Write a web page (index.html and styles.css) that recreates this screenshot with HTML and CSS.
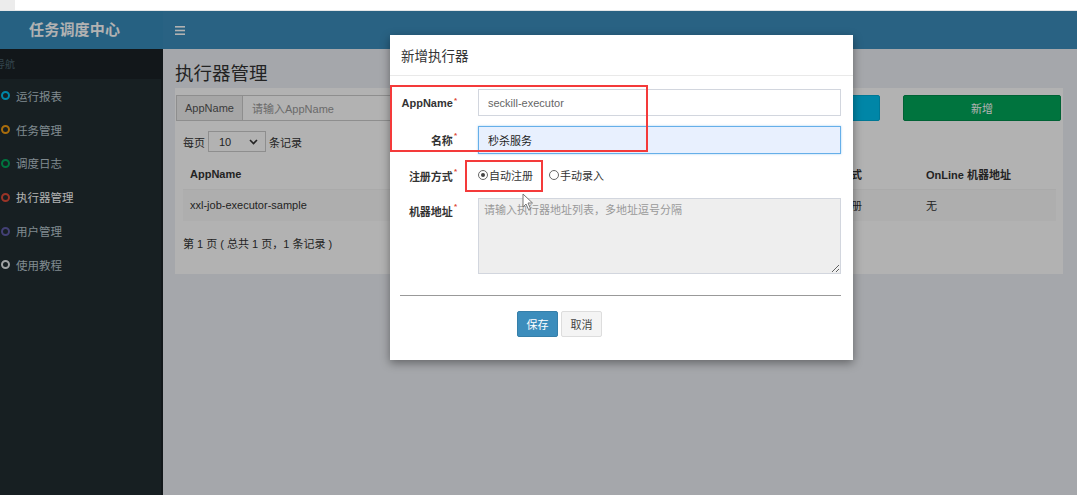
FILE: index.html
```html
<!DOCTYPE html>
<html lang="zh-CN">
<head>
<meta charset="utf-8">
<title>任务调度中心</title>
<link rel="stylesheet" href="styles.css">
</head>
<body>
<div class="chrome"><div class="chrome-tab"></div><div class="chrome-bar"></div></div>
<div class="app">
  <header class="topbar">
    <div class="logo">任务调度中心</div>
    <div class="toggle">
      <svg width="10" height="9" viewBox="0 0 10 9"><rect x="0" y="0" width="10" height="1.6" fill="#fff"/><rect x="0" y="3.7" width="10" height="1.6" fill="#fff"/><rect x="0" y="7.4" width="10" height="1.6" fill="#fff"/></svg>
    </div>
  </header>
  <div class="main">
    <aside class="sidebar">
      <div class="nav-header">导航</div>
      <ul class="menu">
        <li><span class="ring ring-aqua"></span><span>运行报表</span></li>
        <li><span class="ring ring-yellow"></span><span>任务管理</span></li>
        <li><span class="ring ring-green"></span><span>调度日志</span></li>
        <li class="active"><span class="ring ring-red"></span><span>执行器管理</span></li>
        <li><span class="ring ring-purple"></span><span>用户管理</span></li>
        <li><span class="ring ring-gray"></span><span>使用教程</span></li>
      </ul>
    </aside>
    <section class="content">
      <h1 class="page-title">执行器管理</h1>
      <div class="box">
        <div class="search-row">
          <div class="input-group">
            <span class="addon">AppName</span>
            <span class="search-input">请输入AppName</span>
          </div>
          <div class="btn-search">搜索</div>
          <div class="btn-add">新增</div>
        </div>
        <div class="length-row">
          <span>每页</span>
          <span class="select"><span>10</span>
            <svg width="9" height="6" viewBox="0 0 9 6"><path d="M1 1 L4.5 4.5 L8 1" fill="none" stroke="#333" stroke-width="1.6"/></svg>
          </span>
          <span>条记录</span>
        </div>
        <table class="grid">
          <colgroup><col class="c1"><col class="c2"><col class="c3"><col class="c4"><col class="c5"></colgroup>
          <thead>
            <tr><th>AppName</th><th>名称</th><th>排序</th><th>注册方式</th><th>OnLine 机器地址</th></tr>
          </thead>
          <tbody>
            <tr><td>xxl-job-executor-sample</td><td>示例执行器</td><td>1</td><td>自动注册</td><td>无</td></tr>
          </tbody>
        </table>
        <div class="pager">第 1 页 ( 总共 1 页，1 条记录 )</div>
      </div>
    </section>
  </div>
  <div class="backdrop"></div>
  <div class="modal">
    <div class="modal-header">新增执行器</div>
    <div class="modal-body">
      <div class="form">
        <label class="lbl lbl-mid">AppName<sup>*</sup></label>
        <input class="field" type="text" value="seckill-executor">
        <label class="lbl lbl-mid">名称<sup>*</sup></label>
        <input class="field field-focus" type="text" value="秒杀服务">
        <label class="lbl lbl-mid">注册方式<sup>*</sup></label>
        <div class="radios">
          <span class="radio checked"></span><span class="radio-text">自动注册</span>
          <span class="radio radio-second"></span><span class="radio-text">手动录入</span>
        </div>
        <label class="lbl lbl-top">机器地址<sup>*</sup></label>
        <textarea class="area" disabled placeholder="请输入执行器地址列表，多地址逗号分隔"></textarea>
      </div>
      <div class="rule"></div>
      <div class="actions">
        <span class="btn btn-primary">保存</span>
        <span class="btn btn-default">取消</span>
      </div>
    </div>
    <div class="mark mark-1"></div>
    <div class="mark mark-2"></div>
    <svg class="cursor" width="12" height="18" viewBox="0 0 12 18"><path d="M1 1 L1 14 L4 11 L6.5 16.5 L8.5 15.5 L6 10 L10.5 10 Z" fill="#fff" stroke="#777" stroke-width="1"/></svg>
  </div>
</div>
</body>
</html>
```
FILE: styles.css
```css
* { box-sizing: border-box; }
html, body { margin: 0; padding: 0; }
body {
  width: 1077px;
  height: 495px;
  overflow: hidden;
  font-family: "Liberation Sans", "Noto Sans CJK SC", sans-serif;
  font-size: 11px;
  color: #333;
  background: #fff;
}
.chrome {
  height: 11px;
  display: flex;
  background: #fff;
  border-bottom: 1px solid #e3e6e8;
}
.chrome-tab { width: 15px; height: 10px; background: #ececec; }
.chrome-bar { flex: 1; margin-left: 30px; background: #fff; border-radius: 0 0 6px 6px; }

.app {
  position: relative;
  height: 484px;
  display: flex;
  flex-direction: column;
}
.topbar {
  height: 38px;
  display: flex;
  background: #3c8dbc;
}
.logo {
  width: 163px;
  background: #378bbb;
  color: #fff;
  font-weight: bold;
  font-size: 15px;
  line-height: 38px;
  padding-left: 29px;
  letter-spacing: 0.2px;
}
.toggle {
  display: flex;
  align-items: center;
  padding-left: 12px;
}
.main {
  flex: 1;
  display: flex;
}
.sidebar {
  width: 163px;
  background: #222d32;
  border-right: 2px solid #1a2226;
}
.nav-header {
  height: 30px;
  background: #1a2226;
  color: #4b646f;
  font-size: 10px;
  line-height: 31px;
  text-indent: -5px;
  overflow: hidden;
}
.menu { list-style: none; margin: 0; padding: 0; }
.menu li {
  height: 33.8px;
  display: flex;
  align-items: center;
  color: #b8c7ce;
  font-size: 11.5px;
}
.menu li.active { color: #fff; }
.ring {
  width: 9px;
  height: 9px;
  border-radius: 50%;
  border: 2px solid #b8c7ce;
  margin-left: 1px;
  margin-right: 6px;
}
.ring-aqua { border-color: #00c0ef; }
.ring-yellow { border-color: #f39c12; }
.ring-green { border-color: #00a65a; }
.ring-red { border-color: #dd4b39; }
.ring-purple { border-color: #605ca8; }
.ring-gray { border-color: #e6e9eb; }

.content {
  flex: 1;
  background: #ecf0f5;
  padding: 0 14px 0 12px;
}
.page-title {
  margin: 15px 0 4px;
  font-size: 18.5px;
  line-height: 20px;
  font-weight: normal;
  color: #333;
}
.box {
  background: #fff;
  padding: 7px 0 21px;
}
.search-row {
  display: flex;
  height: 26px;
  margin-left: 1px;
  margin-right: 2px;
}
.input-group { flex: 1; display: flex; }
.addon {
  width: 67px;
  background: #eee;
  border: 1px solid #ccc;
  color: #555;
  display: flex;
  align-items: center;
  justify-content: center;
}
.search-input {
  flex: 1;
  border: 1px solid #ccc;
  border-left: 0;
  color: #999;
  padding-left: 9px;
  display: flex;
  align-items: center;
}
.btn-search, .btn-add {
  width: 158px;
  color: #fff;
  display: flex;
  align-items: center;
  justify-content: center;
  border-radius: 2px;
}
.btn-search { margin-left: 22px; background: #00c0ef; border: 1px solid #00acd6; }
.btn-add { margin-left: 23px; background: #00a65a; border: 1px solid #008d4c; }

.length-row {
  display: flex;
  align-items: center;
  margin: 10px 0 0 8px;
  height: 21px;
}
.select {
  width: 58px;
  height: 21px;
  border: 1px solid #ccc;
  margin: 0 3px 0 3px;
  display: flex;
  align-items: center;
  justify-content: space-between;
  padding: 0 7px 0 10px;
  color: #333;
}
.grid {
  margin: 7px 0 0 8px;
  border-collapse: collapse;
  table-layout: fixed;
  width: 873px;
}
.c1 { width: 217px; }
.c2 { width: 220px; }
.c3 { width: 191px; }
.c4 { width: 108px; }
.c5 { width: 137px; }
.grid th, .grid td {
  text-align: left;
  padding: 0 7px;
  white-space: nowrap;
  overflow: hidden;
}
.grid th { height: 30px; font-weight: bold; color: #333; }
.grid td { height: 32px; color: #333; background: #f9f9f9; border-top: 1px solid #f4f4f4; }
.pager {
  margin: 14px 0 0 8px;
  line-height: 18px;
  color: #333;
}

.backdrop {
  position: absolute;
  inset: 0;
  background: rgba(0, 0, 0, 0.3);
}
.modal {
  position: absolute;
  left: 390px;
  top: 24px;
  width: 463px;
  height: 325px;
  background: #fff;
  box-shadow: 0 3px 9px rgba(0, 0, 0, 0.4);
}
.modal-header {
  height: 41px;
  padding: 14px 0 0 11px;
  line-height: 16px;
  font-size: 13.5px;
  color: #333;
  border-bottom: 1px solid #e9e9e9;
}
.modal-body { padding: 13px 12px 0 10px; }
.form {
  display: grid;
  grid-template-columns: 60px 1fr;
  grid-template-rows: 27px 28px 24px 76px;
  column-gap: 18px;
  row-gap: 10px;
}
.lbl {
  font-weight: bold;
  font-size: 11px;
  color: #333;
  text-align: right;
  padding-right: 3px;
  white-space: nowrap;
}
.lbl-mid { align-self: center; }
.lbl-top { padding-top: 5px; }
.lbl sup {
  color: #dd4b39;
  font-size: 8px;
  vertical-align: top;
  margin-left: 1px;
  position: relative;
  top: -1px;
}
.field {
  width: 100%;
  height: 100%;
  border: 1px solid #d2d6de;
  padding: 0 9px;
  font: inherit;
  font-size: 11px;
  color: #666;
  outline: none;
  background: #fff;
}
.field-focus {
  border-color: #66afe9;
  background: #e8f0fe;
  color: #222;
  box-shadow: 0 0 2px rgba(102, 175, 233, 0.6);
}
.radios {
  display: flex;
  align-items: center;
  padding-bottom: 3px;
}
.radio {
  width: 10px;
  height: 10px;
  border: 1px solid #666;
  border-radius: 50%;
  position: relative;
  margin-right: 1px;
}
.radio.checked::after {
  content: "";
  position: absolute;
  left: 2px;
  top: 2px;
  width: 4px;
  height: 4px;
  border-radius: 50%;
  background: #444;
}
.radio-second { margin-left: 16px; }
.radio-text { color: #333; }
.area {
  width: 100%;
  height: 100%;
  border: 1px solid #d2d6de;
  background: #eee;
  padding: 2px 5px;
  font: inherit;
  font-size: 11px;
  resize: vertical;
  color: #999;
}
.area::placeholder { color: #999; }
.rule {
  margin-top: 21px;
  height: 1px;
  background: #999;
}
.actions {
  display: flex;
  gap: 3px;
  margin-top: 15px;
  padding-left: 117px;
}
.btn {
  width: 41px;
  height: 26px;
  display: flex;
  align-items: center;
  justify-content: center;
  border-radius: 2px;
  font-size: 11px;
}
.btn-primary { background: #3c8dbc; border: 1px solid #367fa9; color: #fff; }
.btn-default { background: #f4f4f4; border: 1px solid #ddd; color: #444; }

.mark {
  position: absolute;
  border: 2px solid #f43a3a;
}
.mark-1 { left: 0; top: 50px; width: 258px; height: 67px; }
.mark-2 { left: 75px; top: 125px; width: 78px; height: 32px; }
.cursor { position: absolute; left: 132px; top: 158px; }
```
